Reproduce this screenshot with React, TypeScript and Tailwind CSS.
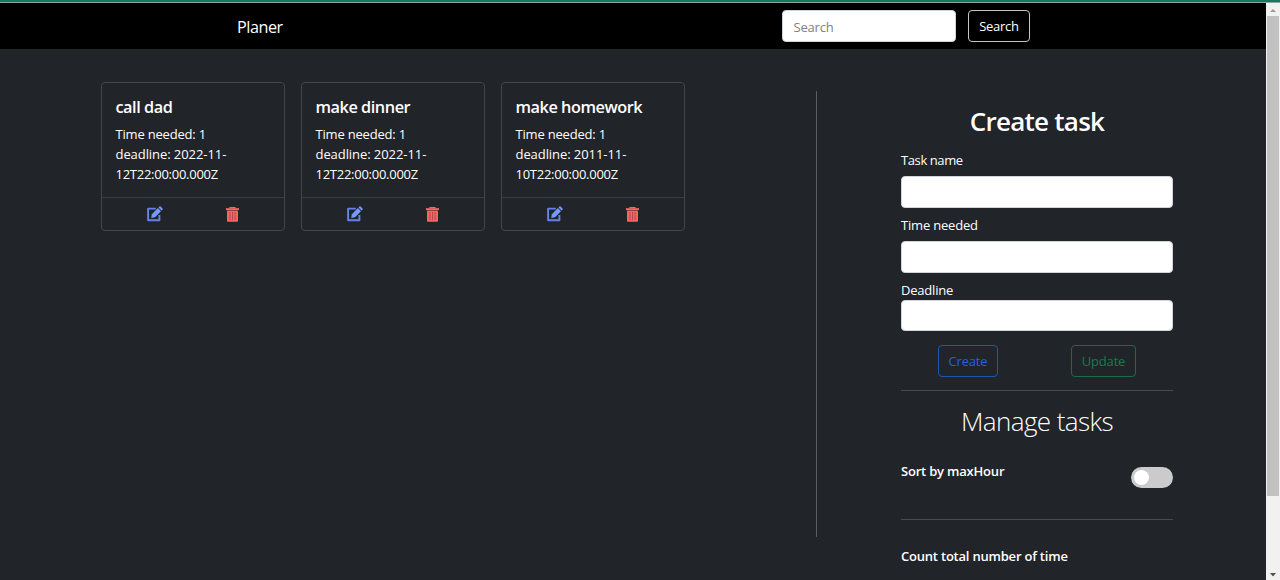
import React from "react";

type Task = { name: string; hours: number; date: string; rest: string };

const tasks: Task[] = [
  { name: "call dad", hours: 1, date: "2022-11-", rest: "12T22:00:00.000Z" },
  { name: "make dinner", hours: 1, date: "2022-11-", rest: "12T22:00:00.000Z" },
  { name: "make homework", hours: 1, date: "2011-11-", rest: "10T22:00:00.000Z" },
];

function EditIcon() {
  return (
    <svg width="16" height="16" viewBox="0 0 16 16" fill="none">
      <path d="M8.8 2.6H1.1V14.2H12.4V9" stroke="#6583e6" strokeWidth="1.9" strokeLinejoin="round" />
      <path d="M4.2 12L4.9 8.2L10.9 2.1L14 5.2L8 11.2Z" fill="#7798ff" />
      <path d="M11.5 1.5L12.4.6Q13 0 13.6.6L15.5 2.5Q16 3.1 15.5 3.7L14.6 4.6Z" fill="#7798ff" />
    </svg>
  );
}

function TrashIcon() {
  return (
    <svg width="13" height="15" viewBox="0 0 13 15" fill="none">
      <path d="M4 1.4V.6H9V1.4" stroke="#fa6467" strokeWidth="1.2" />
      <path d="M0 1.2H13V3H0Z" fill="#fa6467" />
      <path d="M1 3.6H12V13.8Q12 14.8 11 14.8H2Q1 14.8 1 13.8Z" fill="#fa6467" />
      <path d="M3.9 5V13M6.5 5V13M9.1 5V13" stroke="#a5434a" strokeWidth=".8" />
    </svg>
  );
}

function TaskCard({ task }: { task: Task }) {
  return (
    <article className="flex h-[149px] w-[184px] flex-col rounded-[4px] border border-[#43474b]">
      <div className="h-[115px] border-b border-[#393d41] pl-[13.5px] pt-[14px]">
        <h5 className="text-[16.3px] font-semibold leading-[20px] tracking-[-0.46px]">{task.name}</h5>
        <p className="mt-[7px] whitespace-nowrap text-[13px] leading-[20px] tracking-[-0.2px]">
          Time needed: {task.hours}
          <br />
          <span className="tracking-[-0.07px]">deadline: {task.date}</span>
          <br />
          <span className="tracking-[-0.26px]">{task.rest}</span>
        </p>
      </div>
      <div className="flex flex-1 items-center pl-[45px]">
        <EditIcon />
        <span className="ml-[63px]">
          <TrashIcon />
        </span>
      </div>
    </article>
  );
}

const field = "block w-full rounded-[4px] border border-[#ced4da] bg-white text-[13px] text-[#212529] outline-none";

export default function App() {
  return (
    <div className="flex h-[580px] w-[1280px] flex-col overflow-hidden bg-[#212429] font-['Open_Sans','Noto_Sans',sans-serif] text-[13px] text-white">
      <div className="h-[3px] shrink-0 border-b border-[#8fa69c] bg-[#157a5b]" />
      <div className="flex min-h-0 flex-1">
        <div className="flex w-[1266px] flex-col">
          <header className="flex h-[46px] shrink-0 items-center bg-black pl-[237px]">
            <span className="w-[545px] pt-[2px] text-[16.2px] tracking-[-0.45px]">Planer</span>
            <input
              placeholder="Search"
              className="h-[32px] w-[174px] rounded-[4px] border border-[#ced4da] bg-white px-[10.5px] pt-[2px] text-[13px] tracking-[-0.2px] text-[#212529] outline-none placeholder:text-[#7b838a]"
            />
            <button className="ml-[12px] h-[32px] w-[62px] rounded-[4px] border border-[#c4c6c8] pt-[2px] text-[13px] tracking-[-0.28px]">
              Search
            </button>
          </header>
          <main className="flex flex-1">
            <section className="flex w-[816px] items-start gap-[16px] pl-[101px] pt-[33px]">
              {tasks.map((t) => (
                <TaskCard key={t.name} task={t} />
              ))}
            </section>
            <div className="mt-[42px] h-[446px] w-px bg-[#5c5f62]" />
            <aside className="ml-[84px] w-[272px] pt-[54px]">
              <h2 className="text-center text-[26px] font-semibold leading-[36px] tracking-[-0.75px]">Create task</h2>
              <label className="mt-[11px] block leading-[20px] tracking-[-0.4px]">Task name</label>
              <input className={`${field} mt-[6px] h-[32px]`} />
              <label className="mt-[7px] block leading-[20px] tracking-[-0.2px]">Time needed</label>
              <input className={`${field} mt-[6px] h-[32px]`} />
              <label className="mt-[7px] block leading-[20px] tracking-[-0.2px]">Deadline</label>
              <input className={`${field} h-[31px]`} />
              <div className="mt-[14px] flex pl-[37px]">
                <button className="h-[32px] w-[60px] rounded-[4px] border border-[#1c58ad] pt-[2px] tracking-[-0.2px] text-[#1d62ea]">
                  Create
                </button>
                <button className="ml-[73px] h-[32px] w-[65px] rounded-[4px] border border-[#1e6a48] pt-[2px] tracking-[-0.2px] text-[#1b7a4d]">
                  Update
                </button>
              </div>
              <hr className="mt-[13px] border-t border-[#484b4f]" />
              <h2 className="mt-[12px] text-center text-[26px] font-light leading-[36px] tracking-[-0.6px]">Manage tasks</h2>
              <div className="mt-[22px] flex h-[58px] justify-between">
                <span className="font-semibold leading-[20px] tracking-[-0.2px]">Sort by maxHour</span>
                <button
                  role="switch"
                  aria-checked="false"
                  className="mt-[6px] flex h-[21px] w-[42px] items-center rounded-full bg-[#cbcbcb] pl-[3px]"
                >
                  <span className="h-[15px] w-[15px] rounded-full bg-white" />
                </button>
              </div>
              <hr className="border-t border-[#484b4f]" />
              <p className="mt-[26px] font-semibold leading-[20px] tracking-[-0.21px]">Count total number of time</p>
            </aside>
          </main>
        </div>
        <div className="flex w-[14px] flex-col items-center bg-[#f1f1f1]">
          <svg width="14" height="13" viewBox="0 0 14 13">
            <path d="M4 9L7 6L10 9Z" fill="#9a9a9a" />
          </svg>
          <div className="h-[480px] w-[12px] bg-[#c1c1c1]" />
          <svg className="mt-auto" width="14" height="10" viewBox="0 0 14 10">
            <path d="M4 3L7 6.5L10 3Z" fill="#505050" />
          </svg>
        </div>
      </div>
    </div>
  );
}
